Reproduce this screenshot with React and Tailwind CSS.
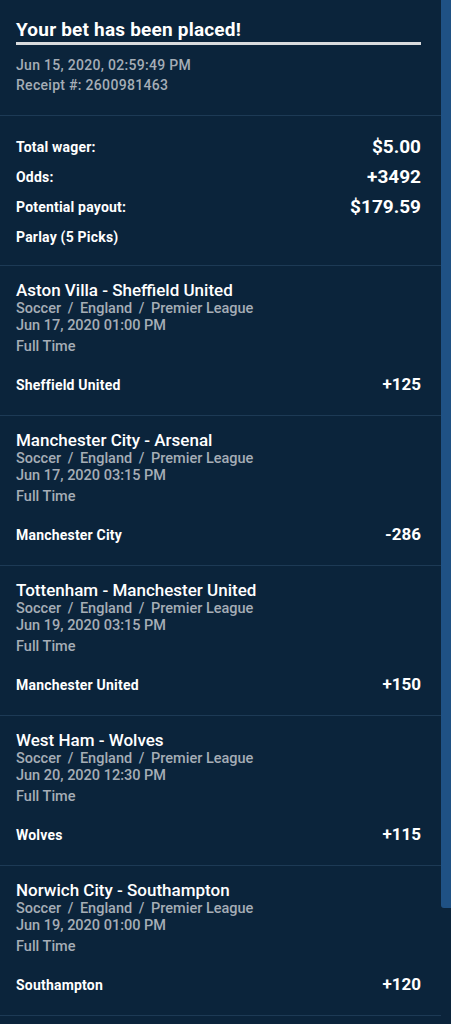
import React from 'react';

const picks = [
    { match: 'Aston Villa - Sheffield United', date: 'Jun 17, 2020 01:00 PM', pick: 'Sheffield United', odds: '+125' },
    { match: 'Manchester City - Arsenal', date: 'Jun 17, 2020 03:15 PM', pick: 'Manchester City', odds: '-286' },
    { match: 'Tottenham - Manchester United', date: 'Jun 19, 2020 03:15 PM', pick: 'Manchester United', odds: '+150' },
    { match: 'West Ham - Wolves', date: 'Jun 20, 2020 12:30 PM', pick: 'Wolves', odds: '+115' },
    { match: 'Norwich City - Southampton', date: 'Jun 19, 2020 01:00 PM', pick: 'Southampton', odds: '+120' },
];

const TotalRow = ({ label, value }) => (
    <div className="flex h-[30px] items-center justify-between">
        <span className="text-[14px] font-bold tracking-[0.2px]">{label}</span>
        {value && <span className="text-[19px] font-bold">{value}</span>}
    </div>
);

const PickCard = ({ pick }) => (
    <div className="border-b border-[#1d3a55] pt-[14px] pb-[20px] pl-4 pr-5">
        <div className="text-[17px] font-medium leading-[20px]">{pick.match}</div>
        <div className="text-[14.5px] font-medium leading-[17px] text-[#a5adb6]">
            Soccer <span className="mx-[3px]">/</span> England <span className="mx-[3px]">/</span> Premier League
        </div>
        <div className="text-[14.5px] font-medium leading-[17px] text-[#a5adb6]">{pick.date}</div>
        <div className="mt-[3px] text-[14.5px] font-medium leading-[20px] text-[#a5adb6]">Full Time</div>
        <div className="mt-[18px] flex h-[20px] items-center justify-between">
            <span className="text-[14px] font-bold tracking-[0.2px]">{pick.pick}</span>
            <span className="text-[17px] font-bold">{pick.odds}</span>
        </div>
    </div>
);

export default function App() {
    return (
        <div className="flex h-[1024px] w-[451px] overflow-hidden bg-[#0b243b] text-white font-['Roboto',sans-serif]">
            <div className="w-[441px] shrink-0">
                {/* header */}
                <div className="border-b border-[#1d3a55] pt-[19px] pb-[20px] pl-4 pr-5">
                    <h1 className="border-b-[3px] border-[#d9dbdd] pb-[1px] text-[19px] font-bold leading-[22px] tracking-[0.2px]">
                        Your bet has been placed!
                    </h1>
                    <div className="mt-[10px] text-[14px] font-medium leading-[20px] tracking-[0.3px] text-[#a5adb6]">
                        <div>Jun 15, 2020, 02:59:49 PM</div>
                        <div>Receipt #: 2600981463</div>
                    </div>
                </div>

                {/* totals */}
                <div className="border-b border-[#1d3a55] pt-[16px] pb-[13px] pl-4 pr-5">
                    <TotalRow label="Total wager:" value="$5.00" />
                    <TotalRow label="Odds:" value="+3492" />
                    <TotalRow label="Potential payout:" value="$179.59" />
                    <TotalRow label="Parlay (5 Picks)" />
                </div>

                {picks.map((p) => (
                    <PickCard key={p.match} pick={p} />
                ))}
            </div>
            <div className="w-[10px] shrink-0">
                <div className="h-[908px] rounded-bl-[3px] bg-[#1f5184]"></div>
            </div>
        </div>
    );
}
